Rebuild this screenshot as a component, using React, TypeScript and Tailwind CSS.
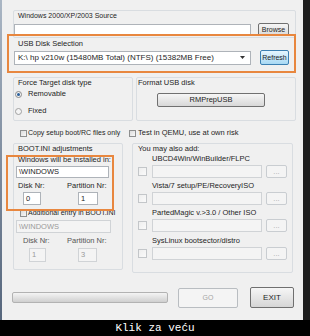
import React from "react";

const Check = ({ size = 7, disabled = false }: { size?: number; disabled?: boolean }) => (
  <div
    className={
      (size === 7 ? "w-[7px] h-[7px] " : "w-[9px] h-[9px] ") +
      "shrink-0 border " +
      (disabled
        ? "border-[#c3c6c9] bg-gradient-to-br from-[#eeeeee] to-[#fafafa]"
        : "border-[#8e8f8f] bg-gradient-to-br from-[#dcdcdc] to-[#f8f8f8]")
    }
  />
);

const Input = ({
  w,
  h,
  text,
  disabled = false,
  className = "",
}: {
  w: string;
  h: string;
  text?: string;
  disabled?: boolean;
  className?: string;
}) => (
  <div
    className={
      `${w} ${h} ${className} shrink-0 flex items-center border ` +
      (disabled
        ? "border-[#d0d3d6] bg-[#f4f4f4] text-[#9a9a9a]"
        : "border-[#aeb3b9] bg-white text-[#1e1e1e]")
    }
  >
    {text ? <span className="pl-[2px] leading-[8px]">{text}</span> : null}
  </div>
);

export default function App() {
  return (
    <div className="w-[310px] h-[336px] bg-black flex flex-col overflow-hidden font-['Liberation_Sans',Arial,sans-serif] text-[7.5px] text-[#1e1e1e]">
      <div className="h-[320px] flex">
        <div className="w-[2px] bg-gradient-to-b from-[#aab6c4] to-[#56667c]" />
        <div className="relative w-[301px] bg-[#f0f0f0] flex flex-col">
          {/* Group 1: Windows source */}
          <div className="mt-[10px] ml-[11px] w-[283px] h-[28px] border border-[#d9dde1] rounded-[2px] pt-[1px]">
            <div className="ml-[4px] leading-[8px] text-[7px]">Windows 2000/XP/2003 Source</div>
            <div className="mt-[3px] flex items-center">
              <Input w="w-[237px]" h="h-[12px]" />
              <button className="ml-[7px] w-[31px] h-[13px] border border-[#707070] rounded-[2px] bg-gradient-to-b from-[#f6f6f6] to-[#dadada] text-[7px] leading-[8px] text-[#1e1e1e]">
                Browse
              </button>
            </div>
          </div>

          {/* USB Disk Selection */}
          <div className="mt-[2px] ml-[16px] leading-[8px]">USB Disk Selection</div>
          <div className="mt-[2px] ml-[12px] flex items-center">
            <div className="w-[237px] h-[14px] border border-[#aeb3b9] bg-white flex items-center justify-between">
              <span className="pl-[3px] leading-[8px] whitespace-nowrap text-[8px]">
                K:\ hp v210w (15480MB Total) (NTFS) (15382MB Free)
              </span>
              <svg width="5" height="3" viewBox="0 0 5 3" className="mr-[5px]">
                <path d="M0 0 H5 L2.5 3 Z" fill="#333" />
              </svg>
            </div>
            <button className="ml-[9px] w-[29px] h-[15px] border border-[#3c7fb1] rounded-[2px] bg-gradient-to-b from-[#e6f5fd] to-[#a8d9f4] text-[7px] leading-[8px] text-[#1e1e1e]">
              Refresh
            </button>
          </div>

          {/* Force / Format row */}
          <div className="mt-[12px] ml-[11px] flex">
            <div className="w-[120px] h-[44px] border border-[#d9dde1] rounded-[2px] pt-[1px]">
              <div className="ml-[4px] leading-[8px]">Force Target disk type</div>
              <div className="mt-[3px] ml-[1px] flex items-center h-[8px]">
                <div className="w-[7px] h-[7px] rounded-full border border-[#8a8a8a] bg-[#f2f2f2] flex items-center justify-center">
                  <div className="w-[3px] h-[3px] rounded-full bg-[#2a5f9a]" />
                </div>
                <span className="ml-[6px] leading-[8px]">Removable</span>
              </div>
              <div className="mt-[9px] ml-[1px] flex items-center h-[8px]">
                <div className="w-[7px] h-[7px] rounded-full border border-[#a0a0a0] bg-[#f4f4f4]" />
                <span className="ml-[6px] leading-[8px]">Fixed</span>
              </div>
            </div>
            <div className="ml-[3px] w-[160px] h-[44px] border border-[#d9dde1] rounded-[2px] pt-[1px]">
              <div className="ml-[1px] leading-[8px]">Format USB disk</div>
              <button className="mt-[6px] ml-[20px] w-[108px] h-[14px] border border-[#707070] rounded-[2px] bg-gradient-to-b from-[#f6f6f6] to-[#d8d8d8] text-[7.5px] leading-[8px] text-[#1e1e1e]">
                RMPrepUSB
              </button>
            </div>
          </div>

          {/* Checkboxes row */}
          <div className="mt-[8px] flex items-center h-[8px]">
            <div className="ml-[18px] w-[109px] flex items-center">
              <Check />
              <span className="ml-[1px] leading-[8px] whitespace-nowrap text-[7px]">Copy setup boot/RC files only</span>
            </div>
            <div className="flex items-center">
              <Check />
              <span className="ml-[2px] leading-[8px] whitespace-nowrap">Test in QEMU, use at own risk</span>
            </div>
          </div>

          {/* BOOT.INI / You may also add */}
          <div className="mt-[6px] ml-[11px] flex items-start">
            <div className="w-[110px] h-[127px] border border-[#d9dde1] rounded-[2px] pt-[1px] flex flex-col">
              <div className="ml-[4px] leading-[8px]">BOOT.INI adjustments</div>
              <div className="mt-[3px] ml-[4px] leading-[8px] whitespace-nowrap">Windows will be installed in:</div>
              <Input w="w-[93px]" h="h-[12px]" text="\WINDOWS" className="mt-[2px] ml-[2px]" />
              <div className="mt-[4px] flex leading-[8px]">
                <span className="ml-[4px] w-[49px]">Disk Nr:</span>
                <span>Partition Nr:</span>
              </div>
              <div className="mt-[2px] flex">
                <Input w="w-[18px]" h="h-[13px]" text="0" className="ml-[9px]" />
                <Input w="w-[20px]" h="h-[13px]" text="1" className="ml-[37px]" />
              </div>
              <div className="mt-[4px] ml-[6px] flex items-center h-[8px]">
                <Check />
                <span className="ml-[1px] leading-[8px] whitespace-nowrap text-[7px]">Additional entry in BOOT.INI</span>
              </div>
              <Input w="w-[95px]" h="h-[13px]" text="\WINDOWS" disabled className="mt-[3px] ml-[2px]" />
              <div className="mt-[4px] flex leading-[8px] text-[#555]">
                <span className="ml-[9px] w-[44px]">Disk Nr:</span>
                <span>Partition Nr:</span>
              </div>
              <div className="mt-[3px] flex">
                <Input w="w-[17px]" h="h-[14px]" text="1" disabled className="ml-[15px]" />
                <Input w="w-[19px]" h="h-[14px]" text="3" disabled className="ml-[32px]" />
              </div>
            </div>

            <div className="ml-[9px] w-[161px] h-[130px] border border-[#d9dde1] rounded-[2px] pt-[1px] flex flex-col">
              <div className="ml-[5px] leading-[8px]">You may also add:</div>
              {[
                "UBCD4Win/WinBuilder/FLPC",
                "Vista/7 setup/PE/RecoveryISO",
                "PartedMagic v.>3.0 / Other ISO",
                "SysLinux bootsector/distro",
              ].map((label, i) => (
                <div key={label} className={(i === 0 ? "mt-[2px]" : i === 3 ? "mt-[5px]" : "mt-[4px]") + " flex flex-col"}>
                  <div className="ml-[19px] leading-[8px]">{label}</div>
                  <div className="mt-[2px] flex items-center">
                    <div className="ml-[5px]">
                      <Check size={9} disabled />
                    </div>
                    <Input w="w-[110px]" h="h-[13px]" disabled className="ml-[5px] border-[#d0d3d6]" />
                    <div className="ml-[4px] w-[21px] h-[13px] border border-[#c9cdd1] rounded-[2px] bg-[#f4f4f4] flex items-center justify-center text-[#a8a8a8] leading-[8px]">
                      ...
                    </div>
                  </div>
                </div>
              ))}
            </div>
          </div>

          {/* Bottom row */}
          <div className="mt-[14px] ml-[10px] flex items-center h-[21px]">
            <div className="w-[156px] h-[11px] border border-[#b2b2b2] rounded-[2px] bg-gradient-to-b from-[#f4f4f4] via-[#e2e2e2] to-[#cfcfcf]" />
            <button className="ml-[10px] w-[60px] h-[20px] border border-[#b9bdc1] rounded-[2px] bg-[#f4f4f4] text-[7px] leading-[8px] text-[#a6a6a6]">
              GO
            </button>
            <button className="ml-[12px] w-[44px] h-[21px] border border-[#707070] rounded-[2px] bg-gradient-to-b from-[#f6f6f6] to-[#d6d6d6] text-[8px] leading-[8px] text-[#1e1e1e]">
              EXIT
            </button>
          </div>

          {/* Orange annotation boxes */}
          <div className="absolute left-[5px] top-[34px] w-[289px] h-[39px] border-2 border-[#e8873f]" />
          <div className="absolute left-[4px] top-[155px] w-[108px] h-[56px] border-2 border-[#e8873f]" />
        </div>
        <div className="w-[7px] bg-[#1f1f1f]" />
      </div>
      <div className="h-[16px] flex items-center justify-center font-['Liberation_Mono',monospace] text-[11px] leading-[12px] text-white">
        Klik za veću
      </div>
    </div>
  );
}
